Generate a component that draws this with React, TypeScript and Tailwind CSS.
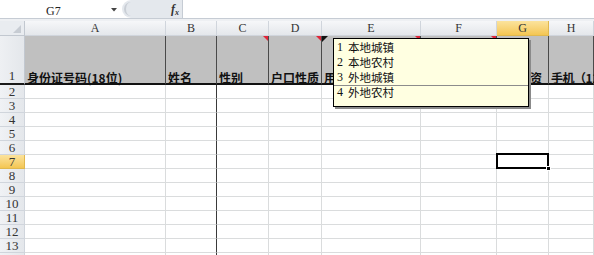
import React from "react";

const cols = ["A", "B", "C", "D", "E", "F", "G", "H"];
const serif = { fontFamily: '"Liberation Serif", "DejaVu Serif", serif' } as React.CSSProperties;
const cjk = { fontFamily: '"Noto Sans CJK SC", "Noto Sans", sans-serif' } as React.CSSProperties;

function RedMark() {
  return (
    <svg className="absolute right-0 top-0" width="5" height="5" viewBox="0 0 5 5">
      <polygon points="0,0 5,0 5,5" fill="#e0263a" />
    </svg>
  );
}

export default function App() {
  const row1: { text: string; mark?: boolean; cls?: string }[] = [
    { text: "身份证号码(18位)" },
    { text: "姓名" },
    { text: "性别", mark: true },
    { text: "户口性质", mark: true },
    { text: "用工形式", mark: true },
    { text: "", mark: true },
    { text: "工资", cls: "pl-[21px]" },
    { text: "手机（11位）", cls: "tracking-[-0.5px]" },
  ];
  const bodyRows = Array.from({ length: 13 }, (_, i) => i + 2);
  const items = ["本地城镇", "本地农村", "外地城镇", "外地农村"];

  return (
    <div className="relative w-[594px] h-[255px] overflow-hidden bg-white">
      {/* formula bar */}
      <div className="flex h-[19px] border-b border-[#c6ccd4] bg-white">
        <div className="relative w-[122px] flex items-center">
          <span className="absolute left-[46px] top-[2px] text-[12px] text-[#222]" style={serif}>G7</span>
          <svg className="absolute left-[111px] top-[8px]" width="6" height="4" viewBox="0 0 6 4">
            <polygon points="0,0 6,0 3,3.5" fill="#444" />
          </svg>
        </div>
        <div className="relative w-[60px] bg-[#e4e8ed] rounded-l-[9px] flex items-center justify-end pr-[3px]">
          <div className="absolute left-[2px] top-[2px] w-[12px] h-[14px] rounded-l-full border-l-2 border-[#c9ced5]"></div>
          <span className="italic text-[12px] font-bold text-[#333]" style={serif}>f<sub className="text-[8px]">x</sub></span>
        </div>
        <div className="flex-1 border-l border-[#c6ccd4] bg-white"></div>
      </div>
      <div className="h-[2px] bg-[#eef0f3]"></div>

      {/* sheet grid */}
      <div className="grid grid-cols-[25px_141px_51px_52px_53px_99px_76px_52px_45px] grid-rows-[15px_49px_repeat(13,14px)]">
        {/* corner */}
        <div className="relative bg-[#e9ecf0] border-r border-b border-[#c2c8d0]">
          <svg className="absolute right-[3px] bottom-[2px]" width="8" height="8" viewBox="0 0 8 8">
            <polygon points="8,0 8,8 0,8" fill="#c7ccd3" />
          </svg>
        </div>
        {cols.map((c) => (
          <div
            key={c}
            className={
              c === "G"
                ? "flex items-center justify-center border-r border-b border-[#e0b84f] bg-gradient-to-b from-[#fbe39c] to-[#f4c651] text-[12px] text-[#333]"
                : "flex items-center justify-center border-r border-b border-[#d0d5dc] bg-gradient-to-b from-[#f6f7f9] to-[#e4e7eb] text-[12px] text-[#333]"
            }
            style={serif}
          >
            {c}
          </div>
        ))}

        {/* row 1 */}
        <div className="flex items-end justify-center pb-[1px] bg-gradient-to-r from-[#eef0f3] to-[#e4e7eb] border-r border-[#c2c8d0] border-b-2 border-b-[#1a1a1a] text-[13px] leading-[12px] text-[#333]" style={serif}>
          1
        </div>
        {row1.map((r, i) => (
          <div
            key={i}
            className={`relative flex items-end whitespace-nowrap overflow-visible bg-[#c0c0c0] border-r border-r-[#4a4a4a] border-b-2 border-b-[#111] pl-[2px] pb-0 text-[12px] font-bold text-[#111] leading-[11px] ${r.cls ?? ""}`}
            style={cjk}
          >
            {r.text}
            {r.mark && <RedMark />}
          </div>
        ))}

        {/* body rows */}
        {bodyRows.map((n) => (
          <React.Fragment key={n}>
            <div
              className={
                n === 7
                  ? "flex items-center justify-center border-r border-b border-[#e0b84f] bg-gradient-to-b from-[#fbe39c] to-[#f4c651] text-[13px] text-[#333] leading-none"
                  : "flex items-center justify-center border-r border-b border-[#d0d5dc] bg-gradient-to-r from-[#f0f2f5] to-[#e4e7eb] text-[13px] text-[#333] leading-none"
              }
              style={serif}
            >
              {n}
            </div>
            {cols.map((c) => (
              <div
                key={c}
                className={`relative border-b border-[#dadcdd] ${c === "B" ? "border-r border-r-[#3a3a3a]" : "border-r border-r-[#dadcdd]"}`}
              >
                {c === "G" && n === 7 && (
                  <div className="absolute -left-[1px] -top-[2px] w-[53px] h-[16px] border-2 border-black z-10">
                    <div className="absolute -right-[4px] -bottom-[4px] w-[5px] h-[5px] bg-black border border-white"></div>
                  </div>
                )}
              </div>
            ))}
          </React.Fragment>
        ))}
      </div>

      {/* data validation input message */}
      <svg className="absolute left-[322px] top-[36px] z-20" width="6" height="6" viewBox="0 0 6 6">
        <polygon points="0,0 6,0 0,6" fill="#111" />
      </svg>
      <div className="absolute left-[333px] top-[38px] w-[196px] h-[69px] bg-[#ffffe1] border border-black shadow-[2px_2px_0_#8a8a8a] z-20 pl-[3px] pt-[1px] text-[11.5px] leading-[15px] text-[#111]" style={cjk}>
        <div className="absolute left-0 right-0 top-[46px] h-[1px] bg-[#8c8c8c]"></div>
        {items.map((t, i) => (
          <div key={t} className="relative flex">
            <span className="w-[11px] text-[12px]" style={serif}>{i + 1}</span>
            <span>{t}</span>
          </div>
        ))}
      </div>
    </div>
  );
}
